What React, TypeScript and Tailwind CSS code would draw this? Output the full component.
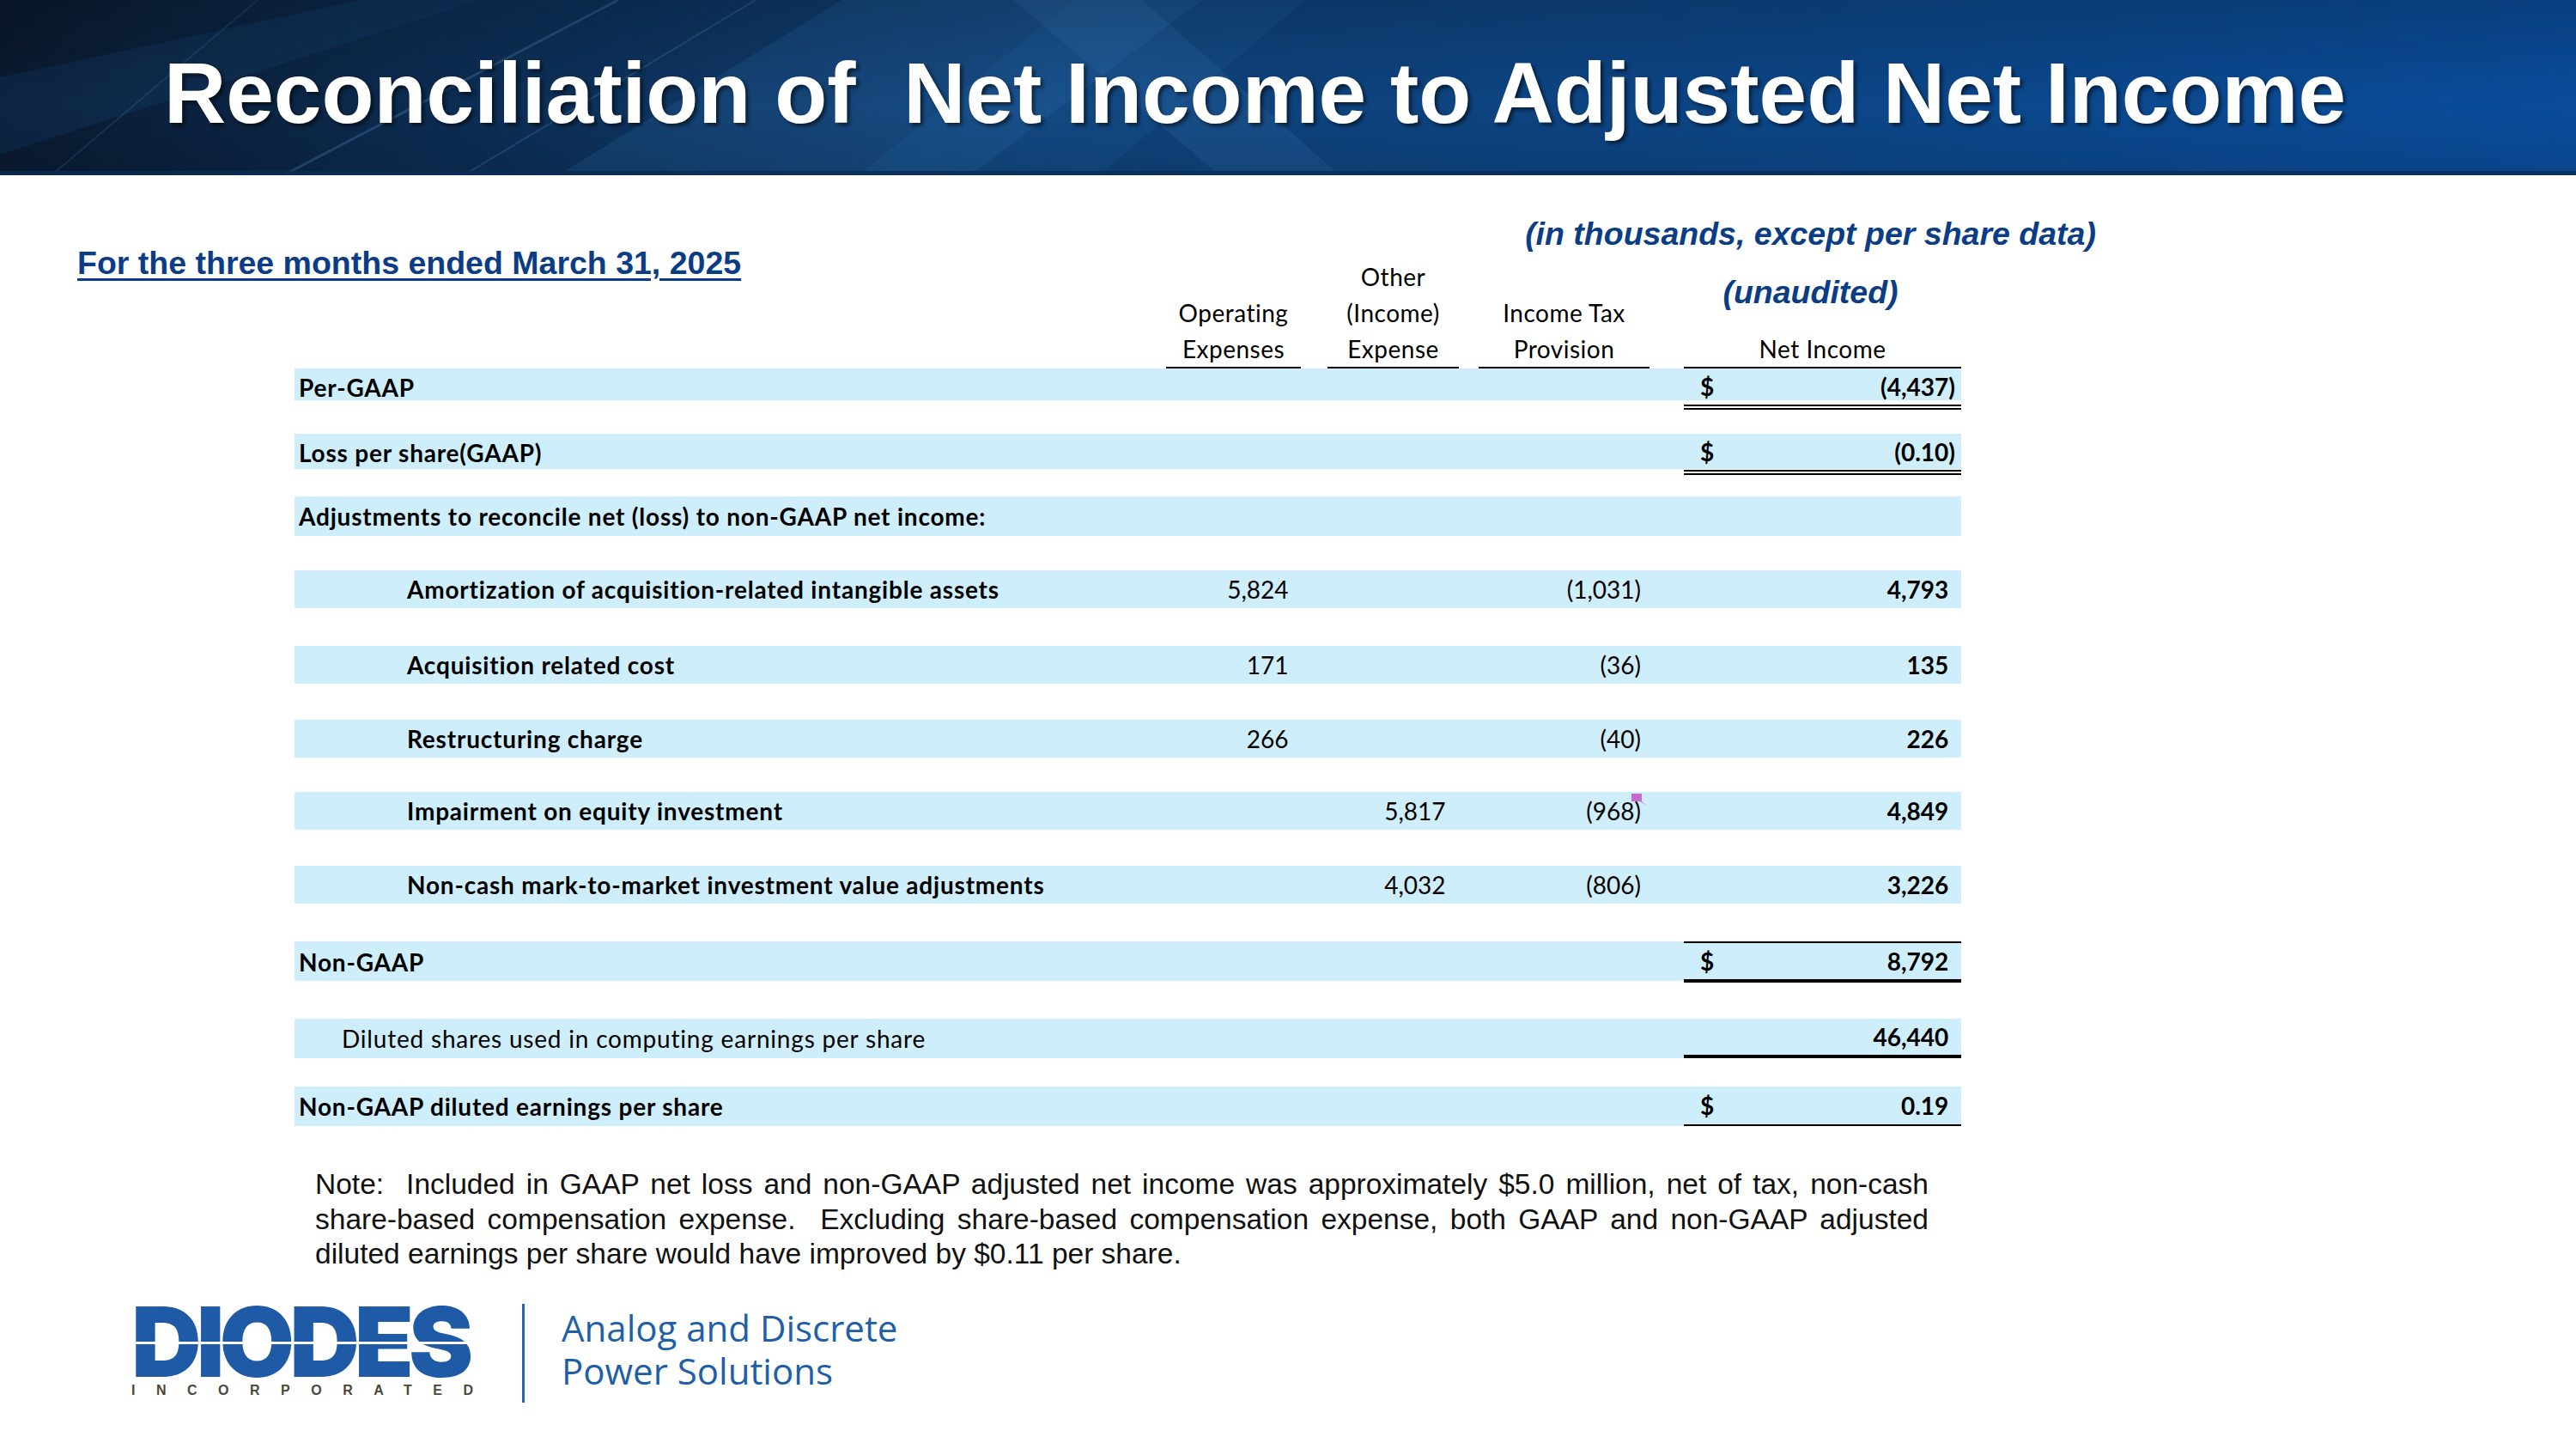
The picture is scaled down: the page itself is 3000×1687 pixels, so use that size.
import React from "react";

type Row = {
  label: string;
  lp: string;
  weight: string;
  h: string;
  mt: string;
  op?: string;
  other?: string;
  tax?: string;
  net?: string;
  dollar?: boolean;
  netB?: string;
  marker?: boolean;
  lb?: string;
};

const ROWS: Row[] = [
  { label: "Per-GAAP", lp: "pl-[5px]", weight: "font-bold", h: "h-[37px]", mt: "mt-0", net: "(4,437)", dollar: true, netB: "border-b-[6px] border-double border-black", lb: "pb-[5px]" },
  { label: "Loss per share(GAAP)", lp: "pl-[5px]", weight: "font-bold", h: "h-[41px]", mt: "mt-[39px]", net: "(0.10)", dollar: true, netB: "border-b-[6px] border-double border-black", lb: "pb-[5px]" },
  { label: "Adjustments to reconcile net (loss) to non-GAAP net income:", lp: "pl-[5px]", weight: "font-bold", h: "h-[46px]", mt: "mt-[32px]" },
  { label: "Amortization of acquisition-related intangible assets", lp: "pl-[131px]", weight: "font-bold", h: "h-[44px]", mt: "mt-[40px]", op: "5,824", tax: "(1,031)", net: "4,793" },
  { label: "Acquisition related cost", lp: "pl-[131px]", weight: "font-bold", h: "h-[44px]", mt: "mt-[44px]", op: "171", tax: "(36)", net: "135" },
  { label: "Restructuring charge", lp: "pl-[131px]", weight: "font-bold", h: "h-[44px]", mt: "mt-[42px]", op: "266", tax: "(40)", net: "226" },
  { label: "Impairment on equity investment", lp: "pl-[131px]", weight: "font-bold", h: "h-[44px]", mt: "mt-[40px]", other: "5,817", tax: "(968)", net: "4,849", marker: true },
  { label: "Non-cash mark-to-market investment value adjustments", lp: "pl-[131px]", weight: "font-bold", h: "h-[44px]", mt: "mt-[42px]", other: "4,032", tax: "(806)", net: "3,226" },
  { label: "Non-GAAP", lp: "pl-[5px]", weight: "font-bold", h: "h-[46px]", mt: "mt-[44px]", net: "8,792", dollar: true, netB: "border-t-2 border-b-4 border-black" },
  { label: "Diluted shares used in computing earnings per share", lp: "pl-[55px]", weight: "font-normal", h: "h-[46px]", mt: "mt-[44px]", net: "46,440", netB: "border-b-4 border-black" },
  { label: "Non-GAAP diluted earnings per share", lp: "pl-[5px]", weight: "font-bold", h: "h-[46px]", mt: "mt-[33px]", net: "0.19", dollar: true, netB: "border-b-2 border-black" },
];

function Num({ v }: { v?: string }) {
  if (!v) return null;
  if (v.startsWith("(")) return <span>{v}</span>;
  return (
    <span>
      {v}
      <span className="invisible">)</span>
    </span>
  );
}

function Banner() {
  return (
    <div className="relative h-[204px] w-full overflow-hidden bg-[#0b3a70]">
      <svg className="absolute inset-0 h-full w-full" viewBox="0 0 3000 204" preserveAspectRatio="none">
        <defs>
          <linearGradient id="bg" x1="0" y1="0" x2="1" y2="0">
            <stop offset="0" stopColor="#0a1a30" />
            <stop offset="0.15" stopColor="#0c2a4e" />
            <stop offset="0.4" stopColor="#0f4178" />
            <stop offset="0.7" stopColor="#0c4687" />
            <stop offset="1" stopColor="#0a4c9b" />
          </linearGradient>
          <linearGradient id="v" x1="0" y1="0" x2="0" y2="1">
            <stop offset="0" stopColor="#000000" stopOpacity="0.18" />
            <stop offset="0.6" stopColor="#000000" stopOpacity="0" />
            <stop offset="1" stopColor="#000000" stopOpacity="0.1" />
          </linearGradient>
        </defs>
        <rect x="0" y="0" width="3000" height="204" fill="url(#bg)" />
        <polygon points="980,0 1400,0 1130,204 650,204" fill="#3a80c4" opacity="0.18" />
        <polygon points="1180,0 1330,0 1560,204 1420,204" fill="#5aa0e0" opacity="0.12" />
        <polygon points="1250,0 1520,0 1280,204 1000,204" fill="#2a70b8" opacity="0.15" />
        <polygon points="0,90 420,0 560,0 0,180" fill="#1d4f86" opacity="0.22" />
        <line x1="720" y1="0" x2="330" y2="204" stroke="#5a90c8" strokeWidth="3" opacity="0.3" />
        <line x1="880" y1="0" x2="540" y2="204" stroke="#5a90c8" strokeWidth="2" opacity="0.25" />
        <line x1="300" y1="0" x2="60" y2="204" stroke="#4a80b8" strokeWidth="2" opacity="0.2" />
        <rect x="0" y="0" width="3000" height="204" fill="url(#v)" />
        <rect x="0" y="199" width="3000" height="5" fill="#0a2c55" opacity="0.8" />
      </svg>
      <div className="relative flex h-full items-center pl-[191px] pt-[12px]">
        <h1 className="whitespace-pre font-['Liberation_Sans',Arial,sans-serif] text-[100px] font-bold leading-none text-white [text-shadow:3px_3px_4px_rgba(0,0,0,0.55)]">
          {"Reconciliation of  Net Income to Adjusted Net Income"}
        </h1>
      </div>
    </div>
  );
}

function Logo() {
  return (
    <div className="mt-[37px] flex items-center pl-[153px]">
      <div className="flex w-[402px] flex-col">
        <div className="relative h-[82px]">
          <div className="font-['Inter',sans-serif] text-[113px] font-black leading-[82px] tracking-[-6px] text-[#1e5aa5]">
            DIODES
          </div>
          <div className="absolute left-0 right-0 top-[41px] h-[3px] bg-white" />
        </div>
        <div className="mt-[6px] whitespace-nowrap font-['Liberation_Sans',Arial,sans-serif] text-[16px] font-bold leading-[20px] tracking-[24.5px] text-[#4b4839]">
          INCORPORATED
        </div>
      </div>
      <div className="ml-[53px] h-[115px] w-[3px] bg-[#2a64a8]" />
      <div className="ml-[43px] -mt-[8px] flex flex-col font-['Open_Sans',sans-serif] text-[42px] leading-[50px] text-[#1f5fa8]">
        <span>Analog and Discrete</span>
        <span>Power Solutions</span>
      </div>
    </div>
  );
}

export default function App() {
  return (
    <div className="relative h-[1687px] w-[3000px] overflow-hidden bg-white">
      <Banner />

      {/* Header block */}
      <div className="flex h-[225px]">
        <div className="w-[1358px] pl-[90px] pt-[80px]">
          <span className="font-['Liberation_Sans',Arial,sans-serif] text-[37.5px] font-bold leading-[44px] text-[#0b3d86] underline decoration-[3px] underline-offset-[5px]">
            For the three months ended March 31, 2025
          </span>
        </div>
        <div className="grid grid-cols-[157px_31px_153px_23px_199px_40px_323px] items-end font-['Lato',sans-serif] text-[28px] leading-[42px] tracking-[0.5px] text-black">
          <div className="whitespace-nowrap border-b-2 border-black text-center">
            <div>Operating</div>
            <div>Expenses</div>
          </div>
          <div />
          <div className="whitespace-nowrap border-b-2 border-black text-center">
            <div>Other</div>
            <div>(Income)</div>
            <div>Expense</div>
          </div>
          <div />
          <div className="whitespace-nowrap border-b-2 border-black text-center">
            <div>Income Tax</div>
            <div>Provision</div>
          </div>
          <div />
          <div className="flex h-full flex-col items-center border-b-2 border-black">
            <div className="mr-[28px] mt-[46px] whitespace-nowrap font-['Liberation_Sans',Arial,sans-serif] text-[37.5px] font-bold italic leading-[44px] tracking-normal text-[#0b3d86]">
              (in thousands, except per share data)
            </div>
            <div className="mr-[28px] mt-[24px] whitespace-nowrap font-['Liberation_Sans',Arial,sans-serif] text-[37.5px] font-bold italic leading-[44px] tracking-normal text-[#0b3d86]">
              (unaudited)
            </div>
            <div className="mt-[23px]">Net Income</div>
          </div>
        </div>
      </div>

      {/* Table */}
      <div className="ml-[343px] w-[1941px] font-['Lato',sans-serif] text-[28px] text-black">
        {ROWS.map((r, i) => (
          <div
            key={i}
            className={`grid grid-cols-[1015px_157px_31px_153px_23px_199px_40px_323px] bg-[#cfeefb] ${r.h} ${r.mt}`}
          >
            <div className={`flex items-center whitespace-nowrap tracking-[0.8px] ${r.lp} ${r.weight} ${r.lb ?? ""}`}>{r.label}</div>
            <div className="flex items-center justify-end pr-[7px]">
              <Num v={r.op} />
            </div>
            <div />
            <div className="flex items-center justify-end pr-[8px]">
              <Num v={r.other} />
            </div>
            <div />
            <div className="relative flex items-center justify-end pr-[10px]">
              <Num v={r.tax} />
              {r.marker && (
                <svg className="absolute left-[177px] top-[1px] h-[16px] w-[20px]" viewBox="0 0 20 16">
                  <path d="M1 1 H13 V10 L18 15 L11 10 H1 Z" fill="#c66ad2" />
                </svg>
              )}
            </div>
            <div />
            <div className={`flex items-center justify-between pl-[19px] pr-[7px] font-bold ${r.netB ?? ""}`}>
              <span>{r.dollar ? "$" : ""}</span>
              <Num v={r.net} />
            </div>
          </div>
        ))}

        {/* Note */}
        <div className="ml-[24px] mt-[48px] w-[1879px] font-['Liberation_Sans',Arial,sans-serif] text-[33.5px] leading-[40.5px] text-[#111]">
          <div className="text-justify [text-align-last:justify] whitespace-nowrap">
            {"Note:\u00a0 Included in GAAP net loss and non-GAAP adjusted net income was approximately $5.0 million, net of tax, non-cash"}
          </div>
          <div className="text-justify [text-align-last:justify] whitespace-nowrap">
            {"share-based compensation expense.\u00a0 Excluding share-based compensation expense, both GAAP and non-GAAP adjusted"}
          </div>
          <div>diluted earnings per share would have improved by $0.11 per share.</div>
        </div>
      </div>

      <Logo />
    </div>
  );
}
